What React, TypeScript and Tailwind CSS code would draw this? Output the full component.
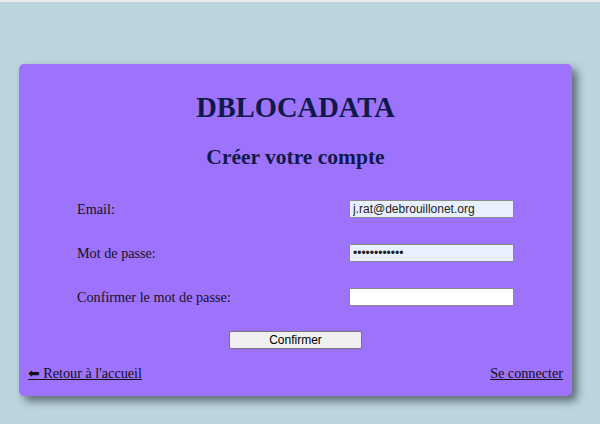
import { useState } from "react";

const fields = [
  { label: "Email:", type: "email", init: "j.rat@debrouillonet.org", filled: true },
  { label: "Mot de passe:", type: "password", init: "motdepasse12", filled: true },
  { label: "Confirmer le mot de passe:", type: "password", init: "", filled: false },
];

const App = () => {
  const [values, setValues] = useState(fields.map((f) => f.init));

  return (
    <div className="min-h-[424px] bg-[#bbd4dd] font-['Liberation_Serif',serif]">
      <div className="h-[2px] bg-[#ececec]"></div>
      <div className="pt-[62px] pl-[19px]">
        <div className="w-[553px] rounded-[5px] bg-[#9d73fb] px-[9px] pt-[28px] pb-[14px] shadow-[5px_5px_8px_rgba(0,0,0,0.5)]">
          <h1 className="text-center text-[28.5px] leading-[32px] font-bold text-[#0f1a4a]">DBLOCADATA</h1>
          <h2 className="mt-[21px] text-center text-[21.5px] leading-[24px] font-bold text-[#0f1a4a]">Créer votre compte</h2>

          <form className="mt-[31px] flex flex-col gap-[26px] px-[49px]" onSubmit={(e) => e.preventDefault()}>
            {fields.map((f, i) => (
              <div key={i} className="flex h-[18px] items-center justify-between">
                <label className="text-[14.2px] leading-[18px] text-[#15121f]">{f.label}</label>
                <input
                  type={f.type}
                  value={values[i]}
                  onChange={(e) => setValues(values.map((v, j) => (j === i ? e.target.value : v)))}
                  className={`h-[18px] w-[165px] border border-[#8a8a8a] px-[3px] font-['Liberation_Sans',Arial,sans-serif] text-[12px] leading-[16px] text-[#222] outline-none ${f.filled ? "bg-[#e8f0fe]" : "bg-white"}`}
                />
              </div>
            ))}
            <div className="-mt-[1px] flex justify-center">
              <button className="h-[18px] w-[133px] rounded-[2px] border border-[#767676] bg-[#efefef] font-['Liberation_Sans',Arial,sans-serif] text-[12px] leading-[16px] text-black">
                Confirmer
              </button>
            </div>
          </form>

          <div className="mt-[15px] flex items-center justify-between text-[14.2px] leading-[18px] text-[#111]">
            <a href="#" className="underline">
              <span className="font-['DejaVu_Sans',sans-serif] text-[14px]">⬅</span> Retour à l'accueil
            </a>
            <a href="#" className="underline">Se connecter</a>
          </div>
        </div>
      </div>
    </div>
  );
};

export default App;
